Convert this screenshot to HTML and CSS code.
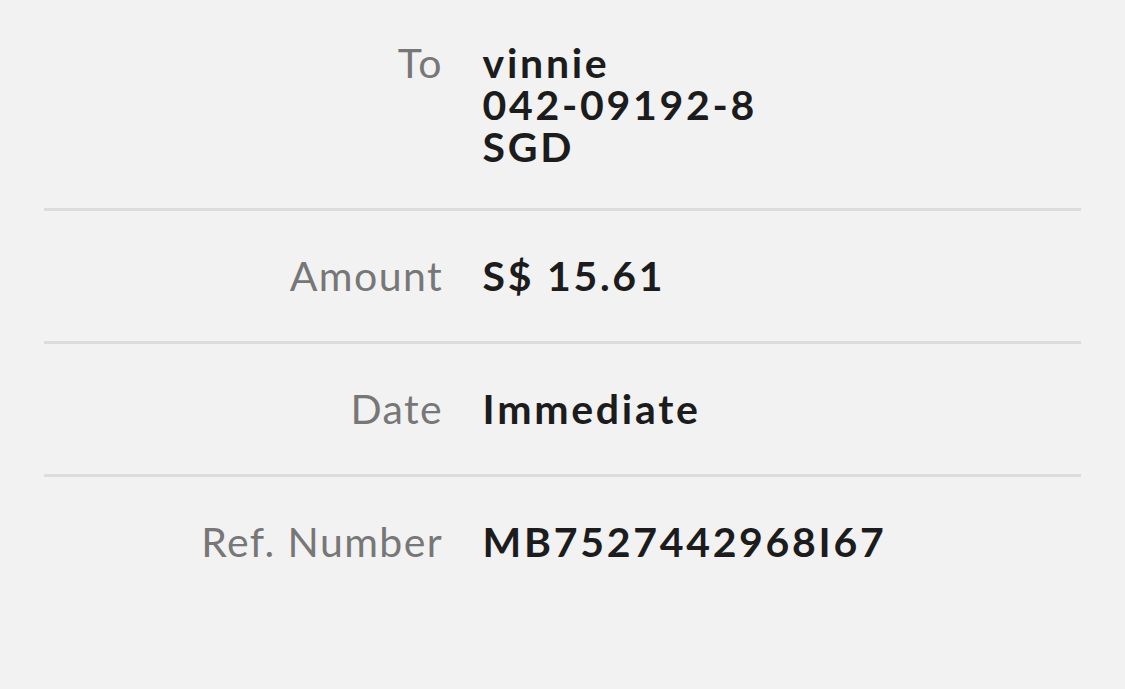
FILE: index.html
```html
<!DOCTYPE html>
<html>
<head>
<meta charset="utf-8">
<link rel="stylesheet" href="styles.css">
</head>
<body>
<div class="details">
  <div class="row row-first">
    <div class="label">To</div>
    <div class="value">vinnie<br>042-09192-8<br>SGD</div>
  </div>
  <div class="row">
    <div class="label">Amount</div>
    <div class="value">S$ 15.61</div>
  </div>
  <div class="row">
    <div class="label">Date</div>
    <div class="value">Immediate</div>
  </div>
  <div class="row row-last">
    <div class="label">Ref. Number</div>
    <div class="value">MB7527442968I67</div>
  </div>
</div>
</body>
</html>
```

FILE: styles.css
```css
html, body {
  margin: 0;
  padding: 0;
  background: #f2f2f2;
}
body {
  width: 1125px;
  height: 689px;
  overflow: hidden;
  font-family: Lato, "Open Sans", sans-serif;
}
.details {
  margin: 0 44px;
}
.row {
  display: flex;
  align-items: flex-start;
  gap: 41px;
  padding: 44px 0 44px;
  border-bottom: 3px solid #dcdcdc;
  font-size: 41px;
  line-height: 42px;
}
.row-first {
  padding-top: 42px;
  padding-bottom: 40px;
}
.row-last {
  border-bottom: none;
}
.label {
  width: 399px;
  flex: none;
  text-align: right;
  color: #777777;
  font-weight: 400;
  letter-spacing: 1.4px;
  margin-right: -1.4px;
}
.value {
  color: #1c1c1c;
  font-weight: 700;
  letter-spacing: 2.7px;
}
```
